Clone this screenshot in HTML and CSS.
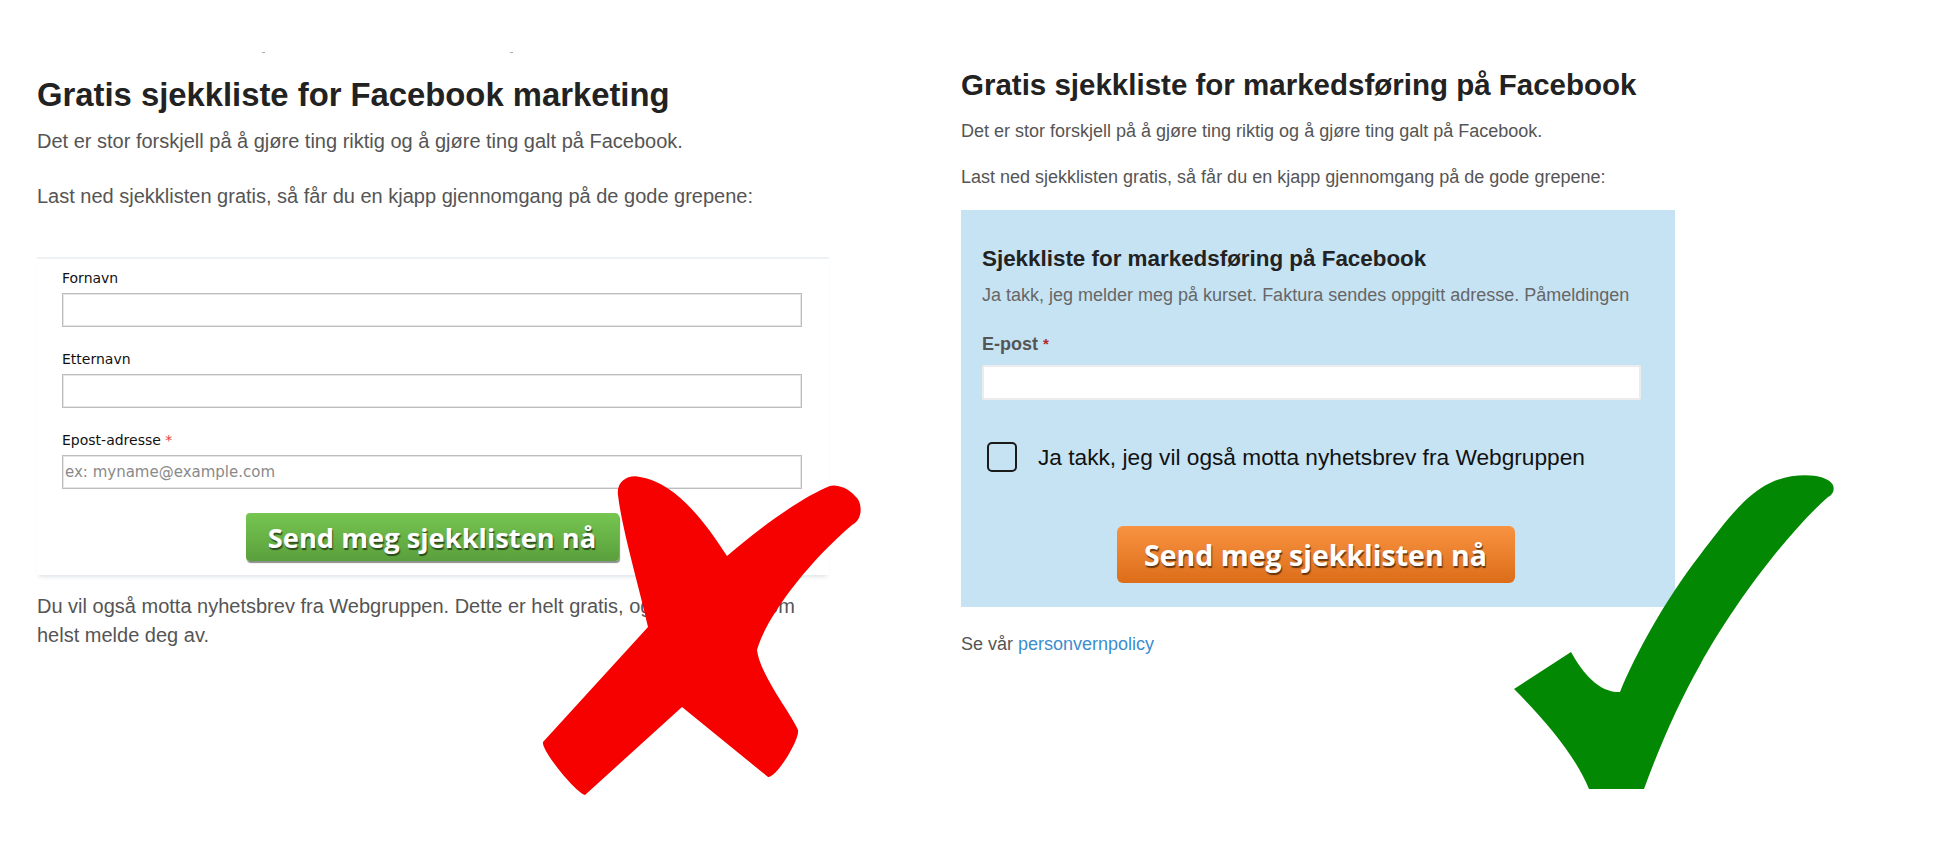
FILE: index.html
```html
<!DOCTYPE html>
<html>
<head>
  <meta charset="utf-8">
  <link rel="stylesheet" href="styles.css">
</head>
<body>
  <div class="page">
    <div class="col-wrong">
      <div class="crop"><span class="tick"></span><span class="tick tick-2"></span></div>
      <h1 class="wrong-title">Gratis sjekkliste for Facebook marketing</h1>
      <p class="wrong-text">Det er stor forskjell på å gjøre ting riktig og å gjøre ting galt på Facebook.</p>
      <p class="wrong-text wrong-text-2">Last ned sjekklisten gratis, så får du en kjapp gjennomgang på de gode grepene:</p>

      <form class="old-form">
        <div class="field">
          <label for="first-name">Fornavn</label>
          <input type="text" id="first-name" class="old-input">
        </div>
        <div class="field">
          <label for="last-name">Etternavn</label>
          <input type="text" id="last-name" class="old-input">
        </div>
        <div class="field">
          <label for="old-email">Epost-adresse <span class="old-star">*</span></label>
          <input type="text" id="old-email" class="old-input" placeholder="ex: myname@example.com">
        </div>
        <div class="send-row">
          <button type="button" class="btn-green">Send meg sjekklisten nå</button>
        </div>
      </form>

      <p class="wrong-text after-text">Du vil også motta nyhetsbrev fra Webgruppen. Dette er helt gratis, og du kan når som helst melde deg av.</p>
    </div>

    <div class="col-right">
      <h1 class="right-title">Gratis sjekkliste for markedsføring på Facebook</h1>
      <p class="right-text">Det er stor forskjell på å gjøre ting riktig og å gjøre ting galt på Facebook.</p>
      <p class="right-text right-text-2">Last ned sjekklisten gratis, så får du en kjapp gjennomgang på de gode grepene:</p>

      <form class="signup-box">
        <h2 class="box-title">Sjekkliste for markedsføring på Facebook</h2>
        <p class="box-lead">Ja takk, jeg melder meg på kurset. Faktura sendes oppgitt adresse. Påmeldingen</p>
        <label class="email-label" for="email">E-post <span class="req">*</span></label>
        <input type="text" id="email" class="email-input">
        <div class="consent">
          <input type="checkbox" id="newsletter" class="consent-box">
          <label for="newsletter">Ja takk, jeg vil også motta nyhetsbrev fra Webgruppen</label>
        </div>
        <div class="actions">
          <button type="button" class="btn-orange">Send meg sjekklisten nå</button>
        </div>
      </form>

      <p class="policy">Se vår <a href="#">personvernpolicy</a></p>
    </div>
  </div>

  <svg class="mark mark-x" viewBox="0 0 350 350" width="350" height="350">
    <path fill="#f60000" d="M110,17 C98,14 86,22 88,35 C92,70 110,130 118,167 L13,282 C11,290 45,332 55,335 L152,247 L238,317 C246,318 270,280 268,270 C262,255 230,215 227,190 C235,160 275,105 322,65 C333,60 333,42 325,36 C318,27 305,24 300,26 C270,38 230,68 197,96 C175,62 145,22 110,17 Z"/>
  </svg>

  <svg class="mark mark-check" viewBox="0 0 350 340" width="350" height="340">
    <path fill="#028802" d="M14,229 L71,192 C80,208 95,230 116,232 L120,232 C135,195 165,140 200,95 C225,62 245,35 270,23 C290,13 325,12 333,25 C335,31 332,35 328,37 C285,75 230,150 200,205 C180,240 160,285 144,329 L89,329 C75,295 45,260 14,229 Z"/>
  </svg>
</body>
</html>
```

FILE: styles.css
```css
body {
  margin: 0;
  width: 1940px;
  height: 866px;
  overflow: hidden;
  position: relative;
  background: #ffffff;
  font-family: "Liberation Sans", Arial, sans-serif;
}
.page {
  display: flex;
  gap: 132px;
  padding-left: 37px;
}

/* left: the old form */
.col-wrong {
  width: 792px;
  padding-top: 52px;
}
.crop {
  display: flex;
  height: 2px;
}
.tick {
  width: 3px;
  height: 1px;
  margin-left: 225px;
  background: #a9a9a9;
}
.tick-2 {
  margin-left: 245px;
}
.wrong-title {
  margin: 21px 0 0;
  font-size: 32.8px;
  line-height: 40px;
  font-weight: bold;
  color: #222222;
}
.wrong-text {
  margin: 12px 0 0;
  font-size: 20px;
  line-height: 29px;
  color: #555555;
}
.wrong-text-2 {
  margin-top: 26px;
}
.old-form {
  margin-top: 46px;
  padding: 11px 27px 14px 25px;
  border-top: 2px solid #eef2f5;
  box-shadow: 0 4px 4px -2px rgba(60, 90, 120, 0.16);
}
.old-form label {
  display: block;
  margin-bottom: 7px;
  font-family: "DejaVu Sans", Verdana, sans-serif;
  font-size: 14px;
  line-height: 16px;
  color: #111111;
}
.old-star {
  color: #e43b3b;
}
.field + .field {
  margin-top: 24px;
}
.old-input {
  display: block;
  width: 100%;
  height: 34px;
  box-sizing: border-box;
  margin: 0;
  padding: 0 2px;
  border: 1px solid #bdbdbd;
  box-shadow: inset 0 0 0 1px #e6e6e6;
  background: #ffffff;
  font-family: "DejaVu Sans", Verdana, sans-serif;
  font-size: 15px;
}
.old-input::placeholder {
  color: #8a8a8a;
}
.send-row {
  display: flex;
  justify-content: center;
  margin-top: 24px;
}
.btn-green {
  width: 373px;
  height: 48px;
  padding: 0;
  border: none;
  border-radius: 4px;
  background: linear-gradient(#76c651, #5a9f3c);
  box-shadow: 1px 2px 1px rgba(40, 50, 40, 0.55);
  color: #ffffff;
  font-family: "Open Sans", sans-serif;
  font-weight: 700;
  font-size: 27.3px;
  text-shadow: 1px 2px 1px rgba(0, 0, 0, 0.55);
}
.after-text {
  margin-top: 17px;
}

/* right: the new form */
.col-right {
  width: 714px;
  padding-top: 67px;
}
.right-title {
  margin: 0;
  font-size: 29.5px;
  line-height: 36px;
  font-weight: bold;
  color: #222222;
}
.right-text {
  margin: 15px 0 0;
  font-size: 18px;
  line-height: 26px;
  color: #555555;
}
.right-text-2 {
  margin-top: 20px;
}
.signup-box {
  margin-top: 20px;
  padding: 35px 34px 24px 21px;
  background: #c6e3f4;
}
.box-title {
  margin: 0;
  font-size: 22.4px;
  line-height: 28px;
  font-weight: bold;
  color: #222222;
}
.box-lead {
  margin: 9px 0 0;
  font-size: 18px;
  line-height: 26px;
  color: #666666;
  white-space: nowrap;
  overflow: hidden;
}
.email-label {
  display: block;
  margin-top: 25px;
  font-size: 18px;
  line-height: 22px;
  font-weight: bold;
  color: #555555;
}
.req {
  color: #b02a2a;
  font-size: 15px;
  vertical-align: top;
}
.email-input {
  display: block;
  width: 100%;
  height: 35px;
  box-sizing: border-box;
  margin: 10px 0 0;
  border: 2px solid #ececec;
  border-radius: 2px;
  background: #ffffff;
}
.consent {
  display: flex;
  align-items: center;
  gap: 21px;
  margin-top: 42px;
  padding-left: 5px;
}
.consent-box {
  appearance: none;
  -webkit-appearance: none;
  width: 30px;
  height: 30px;
  margin: 0;
  border: 2px solid #1a1a1a;
  border-radius: 5px;
  background: transparent;
}
.consent label {
  font-size: 22.7px;
  line-height: 30px;
  color: #111111;
}
.actions {
  display: flex;
  justify-content: center;
  margin-top: 54px;
  padding-left: 8px;
}
.btn-orange {
  width: 398px;
  height: 57px;
  padding: 0;
  border: none;
  border-radius: 6px;
  background: linear-gradient(#f99341, #dc6d19);
  color: #ffffff;
  font-family: "Open Sans", sans-serif;
  font-weight: 700;
  font-size: 28.5px;
  text-shadow: 1px 2px 1px rgba(0, 0, 0, 0.55);
}
.policy {
  margin: 24px 0 0;
  font-size: 18px;
  line-height: 26px;
  color: #555555;
}
.policy a {
  color: #3b8dd0;
  text-decoration: none;
}

/* the big red cross and green tick over the two forms */
.mark {
  position: absolute;
  pointer-events: none;
}
.mark-x {
  left: 530px;
  top: 460px;
}
.mark-check {
  left: 1500px;
  top: 460px;
}
```
